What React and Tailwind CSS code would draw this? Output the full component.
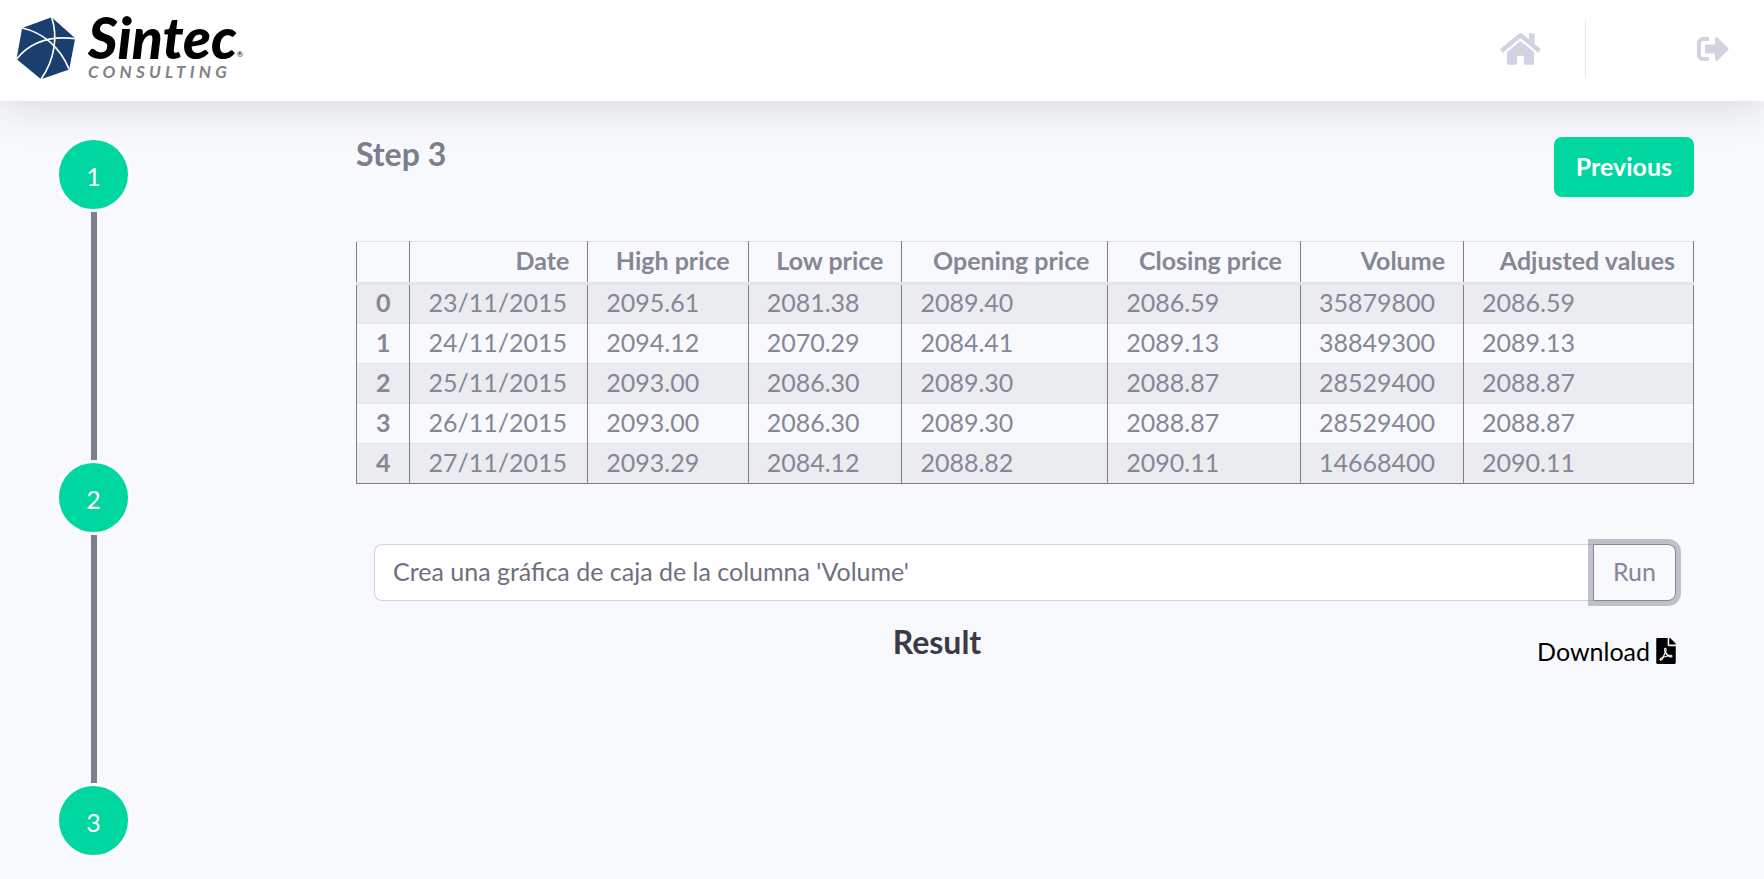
import { useState } from "react";
import { FaFilePdf, FaHome, FaSignOutAlt } from "react-icons/fa";

const STEPS = [1, 2, 3];

const COLUMNS = [
  { name: "Date", width: "w-[13.3%]" },
  { name: "High price", width: "w-[12%]" },
  { name: "Low price", width: "w-[11.5%]" },
  { name: "Opening price", width: "w-[15.4%]" },
  { name: "Closing price", width: "w-[14.4%]" },
  { name: "Volume", width: "w-[12.2%]" },
  { name: "Adjusted values", width: "w-[17.2%]" },
];

const ROWS = [
  ["23/11/2015", "2095.61", "2081.38", "2089.40", "2086.59", "35879800", "2086.59"],
  ["24/11/2015", "2094.12", "2070.29", "2084.41", "2089.13", "38849300", "2089.13"],
  ["25/11/2015", "2093.00", "2086.30", "2089.30", "2088.87", "28529400", "2088.87"],
  ["26/11/2015", "2093.00", "2086.30", "2089.30", "2088.87", "28529400", "2088.87"],
  ["27/11/2015", "2093.29", "2084.12", "2088.82", "2090.11", "14668400", "2090.11"],
];

function Logo() {
  return (
    <a href="#" aria-label="Sintec Consulting" className="flex items-center gap-3">
      <svg viewBox="48 50 180 190" className="w-[60px] h-[63px]" aria-hidden="true">
        <path d="M155 51 L226 114 L208 208 L123 238 L49 177 L66 83 Z" fill="#1a3f6f" />
        <g fill="none" stroke="#fff" strokeWidth="5">
          <path d="M155 51 C174 108 165 178 123 238" />
          <path d="M66 83 C128 96 180 140 208 208" />
          <path d="M49 177 C88 128 150 106 226 115" />
        </g>
      </svg>
      <span className="flex flex-col">
        <span className="flex items-end text-black">
          <span className="text-[57px] leading-[46px] font-black italic">Sintec</span>
          <span className="text-[8px] leading-3">®</span>
        </span>
        <span className="text-[17px] leading-6 font-bold italic tracking-[0.25em] text-[#808285]">
          CONSULTING
        </span>
      </span>
    </a>
  );
}

function Topbar() {
  return (
    <header className="relative z-10 flex items-center justify-between h-[101px] pb-1 pl-4 pr-[35px] bg-white shadow-[0_4px_42px_0_rgba(58,59,69,0.18)]">
      <Logo />
      <nav className="flex items-center text-[#d1d3e2]">
        <a href="#" aria-label="Home">
          <FaHome className="w-[41px] h-9" />
        </a>
        <div className="w-px h-[57px] ml-11 mr-[111px] bg-[#e3e6f0]" />
        <a href="#" aria-label="Log out">
          <FaSignOutAlt className="w-8 h-8" />
        </a>
      </nav>
    </header>
  );
}

function Stepper() {
  return (
    <ol className="flex flex-col items-center w-[75px]">
      {STEPS.map((step) => (
        <li key={step} className="flex flex-col items-center">
          {step > 1 && <div className="w-[6px] h-[248px] bg-[#7b7f8b]" />}
          <span className="flex items-center justify-center w-[75px] h-[75px] pt-[2px] rounded-full border-[3px] border-white bg-[#00d7a0] text-white">
            {step}
          </span>
        </li>
      ))}
    </ol>
  );
}

function PriceTable() {
  return (
    <table className="w-full table-fixed border-collapse border border-[#808080]">
      <thead>
        <tr>
          <th className="w-[4%] h-[42px] p-0 border-x border-t border-b-[3px] border-x-[#808080] border-y-[#e3e3f0]" />
          {COLUMNS.map((col) => (
            <th
              key={col.name}
              scope="col"
              className={`${col.width} h-[42px] pt-0 pb-1 px-[18px] text-right leading-8 font-bold whitespace-nowrap border-x border-t border-b-[3px] border-x-[#808080] border-y-[#e3e3f0]`}
            >
              {col.name}
            </th>
          ))}
        </tr>
      </thead>
      <tbody>
        {ROWS.map((row, i) => (
          <tr key={i} className="odd:bg-black/5">
            <th
              scope="row"
              className="h-10 pt-0 pb-1 px-0 text-center leading-8 font-bold border-x border-t border-x-[#808080] border-t-[#e3e3f0]"
            >
              {i}
            </th>
            {row.map((value, j) => (
              <td
                key={j}
                className="h-10 pt-0 pb-1 px-[18px] leading-8 border-x border-t border-x-[#808080] border-t-[#e3e3f0]"
              >
                {value}
              </td>
            ))}
          </tr>
        ))}
      </tbody>
    </table>
  );
}

export default function App() {
  const [query, setQuery] = useState("Crea una gráfica de caja de la columna 'Volume'");

  return (
    <div className="min-h-screen bg-[#f8f9fd] font-[Lato,sans-serif] text-[25px] leading-9 text-[#858796]">
      <Topbar />
      <div className="flex pt-9 pr-[70px]">
        <aside className="w-[356px] shrink-0 pl-14">
          <Stepper />
        </aside>
        <main className="flex-1">
          <div className="flex items-start justify-between">
            <h1 className="text-[32px] leading-[34px] font-bold text-[#7b7f8b]">Step 3</h1>
            <button type="button" className="h-[60px] px-[22px] pb-[2px] rounded-lg bg-[#00d7a0] font-bold text-white">
              Previous
            </button>
          </div>

          <div className="mt-11">
            <PriceTable />
          </div>

          <div className="mt-[60px] px-[18px]">
            <form className="flex h-[57px]" onSubmit={(e) => e.preventDefault()}>
              <input
                type="text"
                aria-label="Query"
                value={query}
                onChange={(e) => setQuery(e.target.value)}
                className="flex-1 min-w-0 px-[18px] pb-1 rounded-l-lg border border-r-0 border-[#d1d3e2] bg-white text-[#6e707e] outline-none"
              />
              <button
                type="submit"
                className="w-[83px] pb-1 rounded-r-lg border border-[#858796] bg-[#f8f9fd] ring-[5px] ring-[#858796]/50"
              >
                Run
              </button>
            </form>

            <div className="flex items-start mt-6">
              <h2 className="flex-1 text-center text-[32px] leading-[34px] font-bold text-[#3a3b45]">Result</h2>
              <a href="#" className="flex items-center justify-end gap-[6px] w-44 mt-2 text-black">
                Download
                <FaFilePdf className="w-5 h-[26px]" />
              </a>
            </div>
          </div>
        </main>
      </div>
    </div>
  );
}
